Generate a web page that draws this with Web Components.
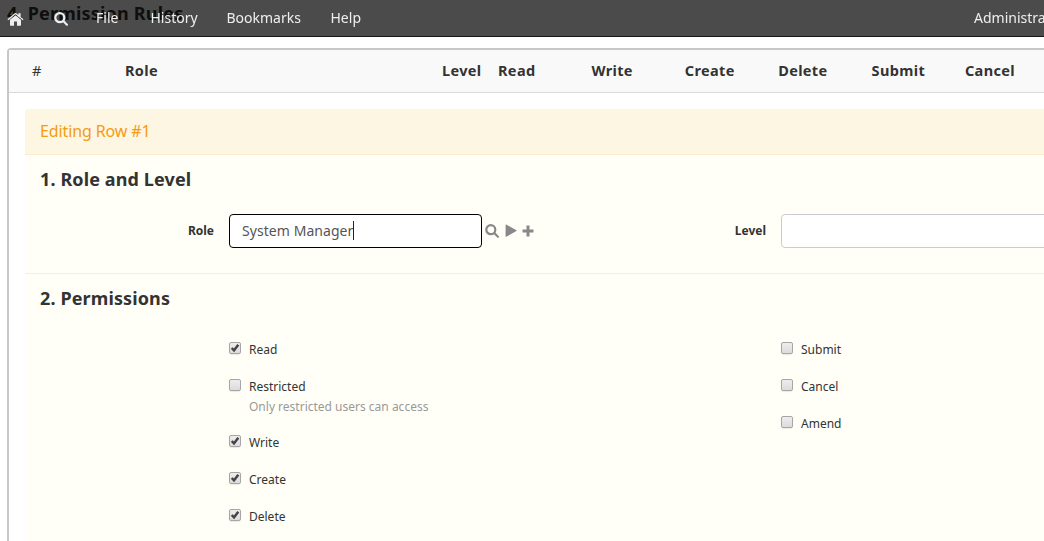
<!DOCTYPE html>
<html lang="en">
<head>
<meta charset="utf-8">
<title>Permission Rules</title>
<style>
html,body{margin:0;height:541px;overflow:hidden;background:#fff}
body{font-family:"Noto Sans","Open Sans",sans-serif;font-size:14px;line-height:20px;color:#333}
</style>
</head>
<body>
<app-page></app-page>
<script>
const define = (name, html, setup) => customElements.define(name, class extends HTMLElement {
  connectedCallback() {
    if (this.shadowRoot) return;
    const root = this.attachShadow({ mode: 'open' });
    root.innerHTML = html;
    if (setup) setup(this, root);
  }
});

const icons = {
  home: '<svg width="17" height="14" viewBox="0 0 17 14"><path d="M8.5 3.2 14 7.8V13a.8.8 0 0 1-.8.8H10V9.6H7v4.2H3.8A.8.8 0 0 1 3 13V7.8z"/><path d="M.5 7.3 7.7 1.2Q8.5.6 9.3 1.2l2.1 1.8V1.2h2.2v3.7l2.9 2.4-.9 1L8.5 2.3 1.400 8.300z"/></svg>',
  search: '<svg width="14" height="14" viewBox="0 0 14 14"><circle cx="5.800" cy="5.700" r="4.500" fill="none" stroke="currentColor" stroke-width="2.200"/><path d="m8.500 9.800 1.500-1.500 3.700 3.600a1.050 1.050 0 0 1-1.500 1.500z"/></svg>',
  play: '<svg width="12" height="14" viewBox="0 0 12 14"><path d="M.6.9Q.6.3 1.200.6l10.200 5.700q.6.400 0 .8L1.200 12.800q-.6.300-.6-.4z"/></svg>',
  plus: '<svg width="12" height="12" viewBox="0 0 12 12"><path d="M4.500.5h3v4h4v3h-4v4h-3v-4h-4v-3h4z"/></svg>'
};

define('ui-icon', '<style>:host{display:block;line-height:0}svg{display:block;fill:currentColor}</style>',
  (el, root) => root.innerHTML += icons[el.getAttribute('name')]);

define('nav-bar', `<style>
:host{position:fixed;top:0;left:0;right:0;height:36px;z-index:2;background:rgba(0,0,0,.705);border-bottom:1px solid #161616;color:#eee;display:block;overflow:hidden}
nav{display:flex;height:36px;align-items:center;white-space:nowrap;padding-left:7px}
ui-icon{margin-top:1px;flex:none}
.home{width:47px}.search{width:42px}
span{flex:none;font-size:14px;line-height:20px}
.file{width:54.500px}.history{width:76px}.book{width:104px}.help{width:643.500px}
</style><nav><ui-icon class="home" name="home"></ui-icon><ui-icon class="search" name="search"></ui-icon><span class="file">File</span><span class="history">History</span><span class="book">Bookmarks</span><span class="help">Help</span><span>Administrator</span></nav>`);

define('grid-head', `<style>
:host{display:grid;height:43px;box-sizing:border-box;align-items:center;grid-template-columns:93px 317px 56px repeat(6,93.400px);padding:0 0 2px 23px;background:#f9f9f9;border-bottom:1px solid #d9d9d9;font-weight:700;font-size:14.500px;letter-spacing:.36px;white-space:nowrap}
.n{font-weight:400}
</style><span class="n">#</span><span>Role</span><span>Level</span><span>Read</span><span>Write</span><span>Create</span><span>Delete</span><span>Submit</span><span>Cancel</span>`);

define('form-section', `<style>
:host{display:block;box-sizing:border-box;border-bottom:1px solid #eee;padding:14px 15px 0}
h4{margin:0 0 1px;font-size:18px;line-height:20px;font-weight:700;letter-spacing:.12px}
.cols{display:grid;grid-template-columns:552px 552px}
</style><h4></h4><div class="cols"><slot></slot></div>`,
  (el, root) => root.querySelector('h4').textContent = el.getAttribute('heading'));

define('form-field', `<style>
:host{display:flex;align-items:center;margin-top:24px;height:34px}
label{flex:none;width:174px;margin-right:15px;text-align:right;font-weight:700;font-size:12px}
.box{flex:none;box-sizing:border-box;width:253px;height:34px;border:1px solid #ccc;border-radius:4px;background:#fff;padding:6px 12px;display:flex;color:#555;letter-spacing:.06px;white-space:nowrap}
:host([wide]) .box{width:300px}
:host([active]) .box{border-color:#000}
.caret{width:1px;height:19px;background:#222}
.tools{display:flex;align-items:center;color:#888;margin-left:3px;gap:5.500px}
</style><label></label><div class="box"><span class="v"></span></div><div class="tools"><slot></slot></div>`,
  (el, root) => {
    root.querySelector('label').textContent = el.getAttribute('label');
    root.querySelector('.v').textContent = el.getAttribute('value') || '';
    if (el.hasAttribute('active')) root.querySelector('.box').insertAdjacentHTML('beforeend', '<i class="caret"></i>');
  });

define('check-row', `<style>
:host{display:flex;align-items:flex-start;height:37px;font-size:12px;line-height:20px;white-space:nowrap}
:host([help]){height:56px}
.c{flex:none;box-sizing:border-box;width:12px;height:12px;margin:2px 8px 0 0;border:1px solid #a6a6a6;border-radius:2px;background:linear-gradient(#ededed,#dcdcdc);box-shadow:0 1px 1px rgba(0,0,0,.08)}
svg{display:block;margin:-1px}
p{margin:0;color:#999}
</style><span class="c"></span><div><span class="t"></span></div>`,
  (el, root) => {
    root.querySelector('.t').textContent = el.getAttribute('label');
    if (el.hasAttribute('checked')) root.querySelector('.c').innerHTML = '<svg width="12" height="12" viewBox="0 0 12 12"><path d="M2.700 6 5 8.400 9.300 2.700" fill="none" stroke="#444" stroke-width="2.500"/></svg>';
    if (el.hasAttribute('help')) {
      const p = document.createElement('p');
      p.textContent = el.getAttribute('help');
      root.querySelector('div').append(p);
    }
  });

define('check-list', '<style>:host{display:block;padding:31px 0 0 189px}</style><slot></slot>');

define('row-editor', `<style>
:host{display:block;margin:16px 0 0 16px;background:#fffff7;border-radius:3px 0 0 0;overflow:hidden}
header{height:46px;box-sizing:border-box;border-bottom:1px solid #fbeccb;background:#fdf6e3;color:#f39c12;font-size:16px;line-height:20px;padding:12px 15px;letter-spacing:-.12px}
.first{height:119px}.second{height:300px}
</style><header>Editing Row #1</header>
<form-section class="first" heading="1. Role and Level">
<form-field label="Role" value="System Manager" active><ui-icon name="search"></ui-icon><ui-icon name="play"></ui-icon><ui-icon name="plus"></ui-icon></form-field>
<form-field label="Level" wide></form-field>
</form-section>
<form-section class="second" heading="2. Permissions">
<check-list><check-row label="Read" checked></check-row><check-row label="Restricted" help="Only restricted users can access"></check-row><check-row label="Write" checked></check-row><check-row label="Create" checked></check-row><check-row label="Delete" checked></check-row></check-list>
<check-list><check-row label="Submit"></check-row><check-row label="Cancel"></check-row><check-row label="Amend"></check-row></check-list>
</form-section>`);

define('app-page', `<style>
:host{display:block;height:541px;overflow:hidden}
h4{margin:0;padding:3px 0 25px 7px;font-size:18px;line-height:20px;font-weight:700;letter-spacing:.2px}
.grid{margin-left:7px;width:1160px;border:2px solid #c7c7c7;border-radius:4px;height:600px}
</style><nav-bar></nav-bar><h4>4. Permission Rules</h4><div class="grid"><grid-head></grid-head><row-editor></row-editor></div>`);
</script>
</body>
</html>
